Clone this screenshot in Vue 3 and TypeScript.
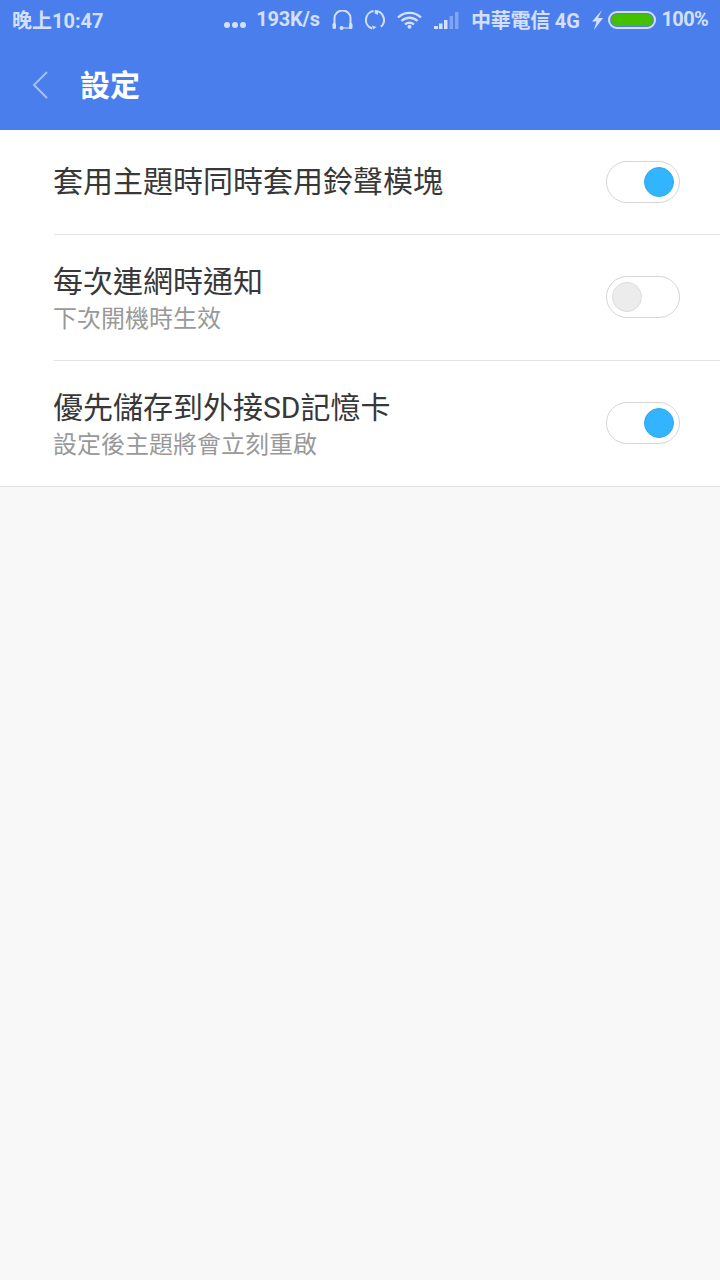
<template>
  <div class="page">
    <header class="appbar">
      <div class="status">
        <span class="label">晚上10:47</span>
        <div class="status-right">
          <span class="dots"><i></i><i></i><i></i></span>
          <span class="label speed">193K/s</span>
          <svg width="21" height="20" viewBox="0 0 21 20" fill="none">
            <path d="M2.500 14V8a8 7.500 0 0 1 16 0v6" stroke="#d4e0fb" stroke-width="2" />
            <rect x="0.500" y="13" width="3.500" height="6" rx="1.500" fill="#d4e0fb" />
            <rect x="17" y="13" width="3.500" height="6" rx="1.500" fill="#d4e0fb" />
            <path d="M9 18h9" stroke="#d4e0fb" stroke-width="1.200" />
            <circle cx="9.500" cy="18" r="2" fill="#d4e0fb" />
          </svg>
          <svg width="20" height="20" viewBox="0 0 20 20" fill="none">
            <path d="M8.500 1.100A9 9 0 0 0 7 18.500" stroke="#d4e0fb" stroke-width="2" />
            <path d="M12.500 1.400A9 9 0 0 1 13.500 18.300" stroke="#d4e0fb" stroke-width="2" transform="rotate(-18 10 10)" />
            <path d="M8 19.500l3.500-2.500L7 15.500zM13 0.500 9 3l4 2z" fill="#d4e0fb" />
          </svg>
          <svg width="25" height="18" viewBox="0 0 25 18" fill="none">
            <path d="M1 6.500a16.500 16.500 0 0 1 23 0M4.500 10a11.500 11.500 0 0 1 16 0M8 13.500a6.500 6.500 0 0 1 9 0" stroke="#d4e0fb" stroke-width="2.400" />
            <circle cx="12.500" cy="15.800" r="2" fill="#d4e0fb" />
          </svg>
          <svg width="25" height="17" viewBox="0 0 25 17">
            <rect x="0" y="14" width="4" height="3" fill="#d4e0fb" />
            <rect x="5" y="11.500" width="3.500" height="5.500" fill="#d4e0fb" />
            <rect x="10" y="8" width="3.500" height="9" fill="#d4e0fb" />
            <rect x="15.500" y="4" width="3.500" height="13" fill="#d4e0fb" opacity="0.4" />
            <rect x="21" y="0" width="3.500" height="17" fill="#d4e0fb" opacity="0.4" />
          </svg>
          <span class="label carrier">中華電信 4G</span>
          <svg width="11" height="20" viewBox="0 0 11 20">
            <path d="M10 0 0 11.500h4.500L2 20l9-12H6z" fill="#d4e0fb" />
          </svg>
          <span class="battery"><span class="battery-fill"></span></span>
          <span class="label percent">100%</span>
        </div>
      </div>
      <div class="toolbar">
        <svg class="back" width="20" height="30" viewBox="0 0 20 30" fill="none">
          <path d="M17 2 4 15l13 13" stroke="#a5c0f5" stroke-width="2" />
        </svg>
        <h1>設定</h1>
      </div>
    </header>

    <section class="list">
      <div v-for="(item, i) in items" :key="i" class="row" :class="{ single: !item.sub }">
        <div class="text">
          <div class="title">{{ item.title }}</div>
          <div v-if="item.sub" class="sub">{{ item.sub }}</div>
        </div>
        <span class="switch" :class="{ on: item.on }"><span class="knob"></span></span>
      </div>
    </section>
  </div>
</template>

<script setup lang="ts">
const items = [
  { title: "套用主題時同時套用鈴聲模塊", on: true },
  { title: "每次連網時通知", sub: "下次開機時生效", on: false },
  { title: "優先儲存到外接SD記憶卡", sub: "設定後主題將會立刻重啟", on: true },
];
</script>

<style>
body {
  margin: 0;
  background: #f8f8f8;
}
</style>

<style scoped>
.page {
  width: 720px;
  height: 1280px;
  background: #f8f8f8;
  font-family: Roboto, "Noto Sans CJK TC", sans-serif;
  overflow: hidden;
}

.appbar {
  background: #4a7eec;
  height: 130px;
}

.status {
  height: 40px;
  display: flex;
  align-items: center;
  justify-content: space-between;
  padding: 0 12px;
  font-size: 20px;
  font-weight: 700;
  color: #d4e0fb;
}

.status-right {
  display: flex;
  align-items: center;
  gap: 12px;
}

.label {
  margin-top: -2px;
}

.dots {
  display: flex;
  gap: 2px;
  margin: 10px -2px 0 0;
}

.dots i {
  width: 6px;
  height: 6px;
  border-radius: 50%;
  background: #d4e0fb;
}

.speed {
  letter-spacing: -0.2px;
}

.carrier {
  letter-spacing: -0.2px;
}

.battery {
  width: 48px;
  height: 18px;
  margin-left: -7px;
  box-sizing: border-box;
  border: 2px solid #d4e0fb;
  border-radius: 9px;
  padding: 1px;
  display: flex;
}

.battery-fill {
  flex: 1;
  background: #44c000;
  border-radius: 6px;
}

.percent {
  margin-left: -6px;
  letter-spacing: -0.7px;
}

.toolbar {
  height: 90px;
  display: flex;
  align-items: center;
  padding-left: 30px;
}

.back {
  margin-right: 30px;
}

h1 {
  margin: -4px 0 0;
  font-size: 30px;
  font-weight: 700;
  color: #fff;
}

.list {
  background: #fff;
  padding-left: 54px;
  border-bottom: 1px solid #e3e3e3;
}

.row {
  height: 125px;
  display: flex;
  align-items: center;
  justify-content: space-between;
  padding-right: 40px;
  border-bottom: 1px solid #e3e3e3;
}

.row.single {
  height: 104px;
}

.row:last-child {
  border-bottom: none;
}

.text {
  margin-left: -1px;
}

.title {
  font-size: 30px;
  line-height: 42px;
  color: #383838;
}

.row.single .title {
  line-height: 38px;
}

.sub {
  font-size: 24px;
  line-height: 32px;
  color: #999;
}

.switch {
  width: 74px;
  height: 42px;
  box-sizing: border-box;
  border: 1px solid #d6d6d6;
  border-radius: 21px;
  background: #fff;
  display: flex;
  align-items: center;
  padding: 0 5px;
  margin-top: -2px;
}

.row.single .switch {
  margin-top: 0;
}

.switch.on {
  justify-content: flex-end;
}

.knob {
  width: 30px;
  height: 30px;
  box-sizing: border-box;
  border-radius: 50%;
  border: 1px solid #dcdcdc;
  background: #ececec;
}

.on .knob {
  border-color: #2fa8f0;
  background: #33b4ff;
}
</style>
